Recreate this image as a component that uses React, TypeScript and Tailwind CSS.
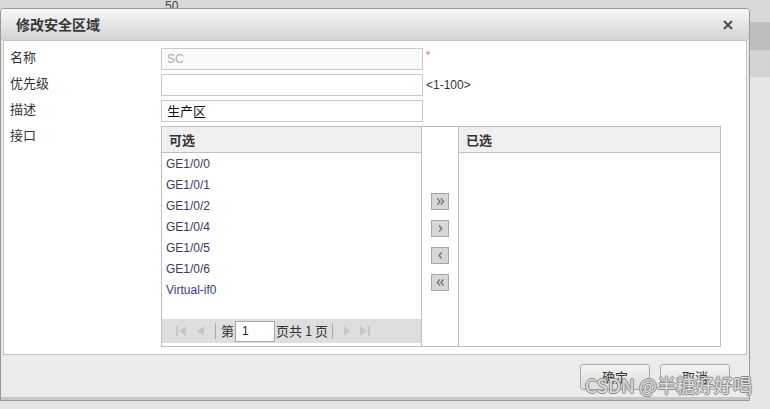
import React from "react";

const cjk = '"Noto Sans CJK SC", "Liberation Sans", sans-serif';
const latin = '"Liberation Sans", "Noto Sans CJK SC", sans-serif';

const items = ["GE1/0/0", "GE1/0/1", "GE1/0/2", "GE1/0/4", "GE1/0/5", "GE1/0/6", "Virtual-if0"];

function Chevrons({ dir, count }: { dir: "l" | "r"; count: 1 | 2 }) {
  const one = (x: number) =>
    dir === "r" ? `M${x} 5 L${x + 3} 8.5 L${x} 12` : `M${x + 3} 5 L${x} 8.5 L${x + 3} 12`;
  const xs = count === 2 ? [5, 9] : [7];
  return (
    <svg width="16" height="15" viewBox="0 0 16 17" className="block">
      {xs.map((x) => (
        <path key={x} d={one(x)} fill="none" stroke="#6f6f6f" strokeWidth="1.5" />
      ))}
    </svg>
  );
}

function MoveButton({ dir, count }: { dir: "l" | "r"; count: 1 | 2 }) {
  return (
    <button
      type="button"
      className="flex h-[17px] w-[18px] items-center justify-center border border-[#a6a6a6] bg-[#d7d7d7]"
    >
      <Chevrons dir={dir} count={count} />
    </button>
  );
}

function PanelHeader({ label }: { label: string }) {
  return (
    <div
      className="flex h-[26px] items-center border-b border-[#c0c0c4] bg-[#efefef] pl-[7px] text-[13px] font-bold text-[#333]"
      style={{ fontFamily: cjk }}
    >
      {label}
    </div>
  );
}

function Pager() {
  const g = "#c6c6c6";
  return (
    <div className="flex h-[24px] items-center bg-[#dedede] pl-[14px] text-[13px] text-[#333]">
      <svg width="11" height="12" viewBox="0 0 11 12">
        <rect x="0" y="1" width="2" height="10" fill={g} />
        <path d="M10 1 L3 6 L10 11 Z" fill={g} />
      </svg>
      <svg width="9" height="12" viewBox="0 0 9 12" className="ml-[9px]">
        <path d="M8 1 L1 6 L8 11 Z" fill={g} />
      </svg>
      <span className="ml-[10px] h-[16px] w-px bg-[#a8a8a8]" />
      <span className="ml-[5px]" style={{ fontFamily: cjk }}>第</span>
      <span
        className="ml-px flex h-[21px] w-[40px] items-center border border-[#a9a9a9] bg-white pl-[6px] text-[12px] text-[#222]"
        style={{ fontFamily: latin }}
      >
        1
      </span>
      <span className="ml-px" style={{ fontFamily: cjk }}>
        页共 1 页
      </span>
      <span className="ml-[4px] h-[16px] w-px bg-[#a8a8a8]" />
      <svg width="8" height="12" viewBox="0 0 8 12" className="ml-[10px]">
        <path d="M1 1 L7 6 L1 11 Z" fill={g} />
      </svg>
      <svg width="12" height="12" viewBox="0 0 12 12" className="ml-[8px]">
        <path d="M1 1 L8 6 L1 11 Z" fill={g} />
        <rect x="9" y="1" width="2" height="10" fill={g} />
      </svg>
    </div>
  );
}

function Row({ label, children }: { label: string; children: React.ReactNode }) {
  return (
    <div className="flex items-start">
      <div className="w-[151px] text-[13px] leading-[17px] text-[#333]" style={{ fontFamily: cjk }}>
        {label}
      </div>
      {children}
    </div>
  );
}

const inputCls = "h-[22px] w-[262px] border border-[#c8c8c8] px-[5px] text-[12px] flex items-center";

export default function App() {
  return (
    <div className="relative h-[409px] w-[770px] overflow-hidden bg-[#e5e5e5]" style={{ fontFamily: latin }}>
      {/* page behind the dialog */}
      <div className="flex flex-col">
        <div className="h-[22px] bg-[#d8d8d8] pl-[165px] text-[12px] leading-[12px] text-[#444]">50</div>
        <div className="h-[28px] bg-[#bebebe]" />
        <div className="h-[27px] bg-[#d4d4d4]" />
      </div>

      {/* dialog */}
      <div className="absolute left-0 top-[8px] flex h-[393px] w-[750px] flex-col overflow-hidden rounded-t-[4px] border border-[#989898] bg-[#ebebeb]">
        <div className="flex h-[31px] shrink-0 items-center justify-between bg-gradient-to-b from-[#f8f8f8] to-[#d3d3d3] pl-[15px] pr-[16px]">
          <span className="text-[14px] font-semibold text-[#363636]" style={{ fontFamily: cjk }}>
            修改安全区域
          </span>
          <svg width="10" height="10" viewBox="0 0 10 10">
            <path d="M1 1 L9 9 M9 1 L1 9" stroke="#4a4a4a" strokeWidth="1.8" />
          </svg>
        </div>

        <div className="mx-[2px] flex h-[315px] shrink-0 flex-col gap-[4px] border border-[#c4c4c4] bg-white pl-[6px] pt-[7px]">
          <Row label="名称">
            <div className={`${inputCls} bg-[#fafafa] text-[#aaa]`}>SC</div>
            <span className="ml-[3px] text-[11px] leading-[14px] text-[#f06a6a]">*</span>
          </Row>
          <Row label="优先级">
            <div className={`${inputCls} bg-white`} />
            <span className="ml-[3px] self-center text-[12px] text-[#333]">&lt;1-100&gt;</span>
          </Row>
          <Row label="描述">
            <div className={`${inputCls} bg-white text-[13px] text-[#111]`} style={{ fontFamily: cjk }}>
              生产区
            </div>
          </Row>
          <Row label="接口">
            <div className="flex h-[221px] w-[560px] border border-[#c0c0c4]">
              <div className="flex w-[260px] flex-col border-r border-[#c0c0c4]">
                <PanelHeader label="可选" />
                <div className="flex flex-1 flex-col pl-[4px]">
                  {items.map((it) => (
                    <div
                      key={it}
                      className={`flex h-[21px] items-center text-[12px] ${
                        it.startsWith("Virtual") ? "text-[#3c3c86]" : "text-[#3a3a5c]"
                      }`}
                    >
                      {it}
                    </div>
                  ))}
                </div>
                <Pager />
                <div className="h-[3px] bg-white" />
              </div>
              <div className="flex w-[37px] flex-col items-center gap-[10px] border-r border-[#c0c0c4] pt-[66px]">
                <MoveButton dir="r" count={2} />
                <MoveButton dir="r" count={1} />
                <MoveButton dir="l" count={1} />
                <MoveButton dir="l" count={2} />
              </div>
              <div className="flex flex-1 flex-col">
                <PanelHeader label="已选" />
              </div>
            </div>
          </Row>
        </div>

        <div className="flex flex-1 items-start justify-end gap-[10px] pr-[19px] pt-[9px]">
          {["确定", "取消"].map((b) => (
            <button
              key={b}
              type="button"
              className="flex h-[26px] w-[70px] items-center justify-center rounded-[3px] border border-[#aaaaaa] bg-gradient-to-b from-[#f4f4f4] to-[#dcdcdc] text-[13px] text-[#333]"
              style={{ fontFamily: cjk }}
            >
              {b}
            </button>
          ))}
        </div>
        <div className="h-[3px] shrink-0 bg-[#c6c6c6]" />
      </div>

      {/* watermark baked into the screenshot */}
      <div
        className="absolute left-[585px] top-[373px] whitespace-nowrap text-[19px] leading-[24px] text-[#f2f2f2d0] [text-shadow:1px_0_#8c8c8c,-1px_0_#8c8c8c,0_1px_#8c8c8c,0_-1px_#8c8c8c]"
        style={{ fontFamily: cjk }}
      >
        CSDN @半糖好好喝
      </div>
    </div>
  );
}
